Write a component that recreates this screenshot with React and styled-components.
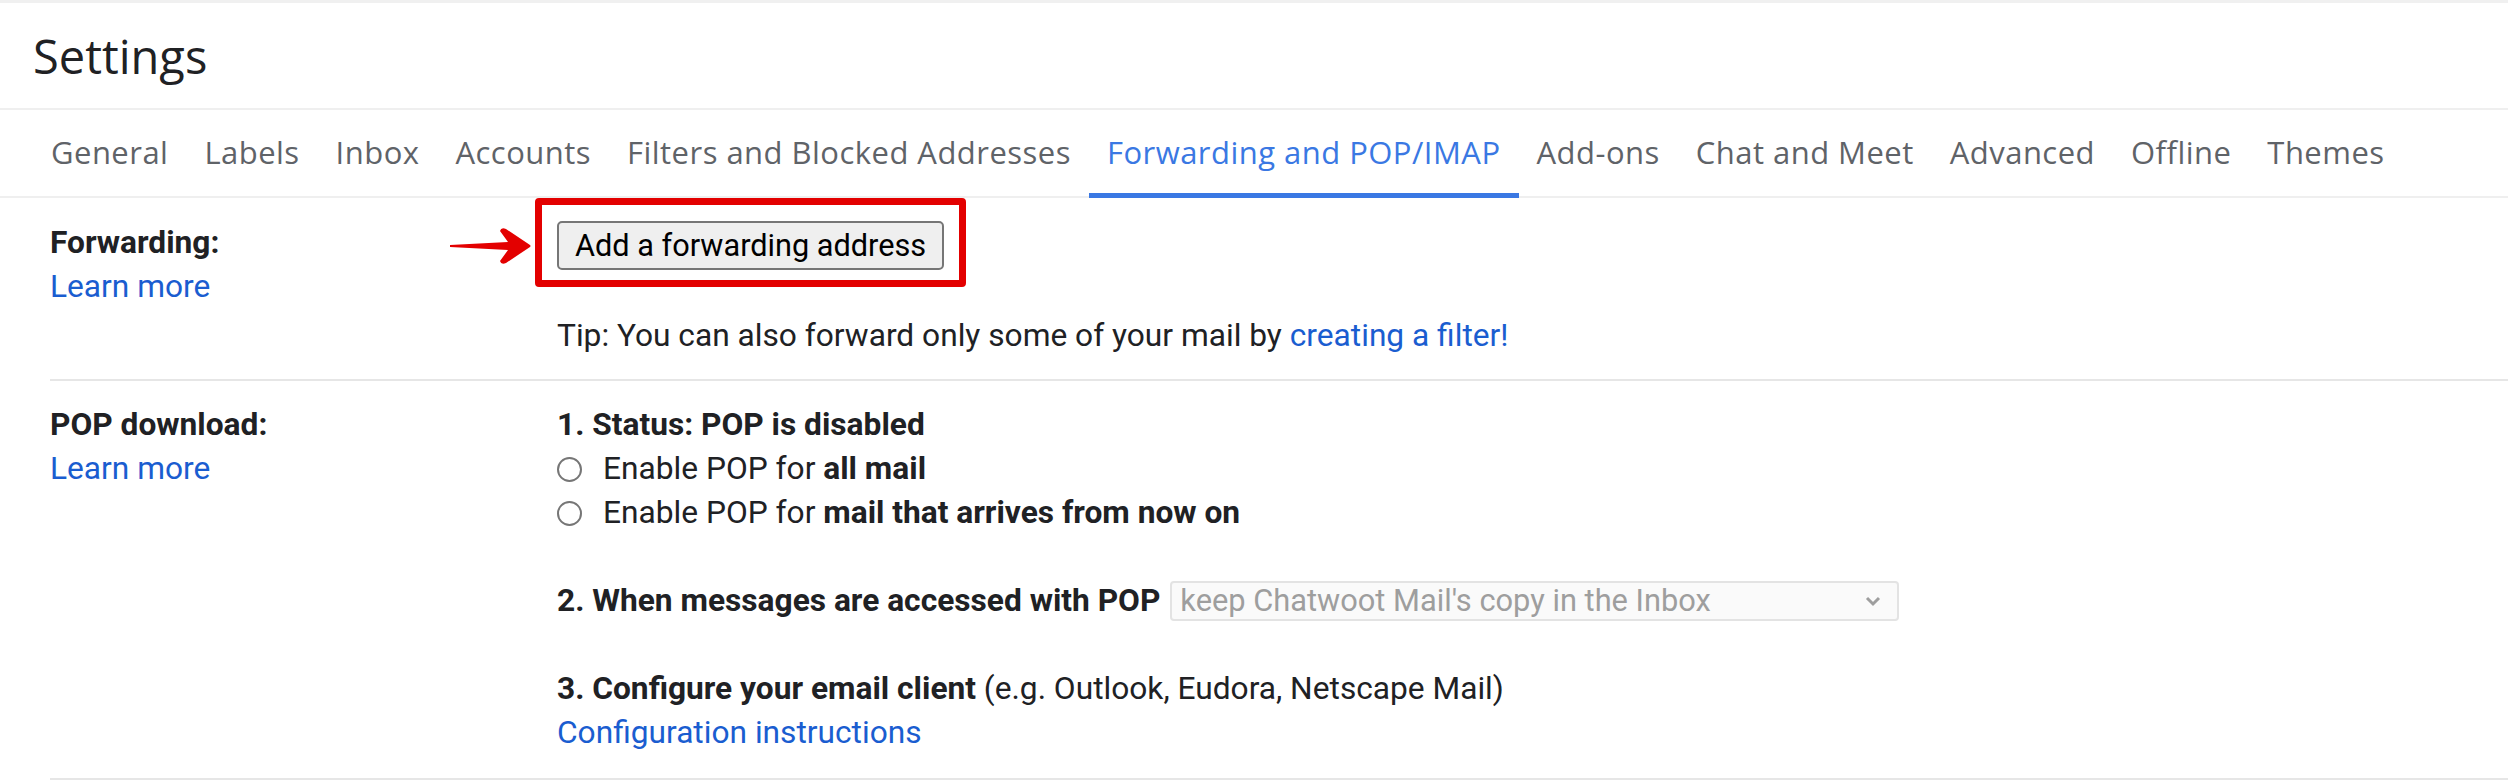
import styled, { createGlobalStyle } from "styled-components";

const GlobalStyle = createGlobalStyle`
  body {
    margin: 0;
    background: #fff;
    font-family: Roboto, "Liberation Sans", Arial, sans-serif;
    color: #202124;
  }
`;

const Page = styled.div`
  width: 2508px;
  border-top: 3px solid #f0f0f0;
`;

const TitleBar = styled.header`
  padding: 21px 0 20px 33px;
  border-bottom: 2px solid #efefef;
`;

const Title = styled.h1`
  margin: 0;
  font-family: "Open Sans", Roboto, sans-serif;
  font-weight: 400;
  font-size: 47px;
  line-height: 64px;
  color: #202124;
`;

const TabBar = styled.nav`
  display: flex;
  padding-left: 33px;
  border-bottom: 2px solid #efefef;
`;

const Tab = styled.div`
  padding: 21px 18px 20px;
  margin-bottom: -2px;
  font-family: "Open Sans", Roboto, sans-serif;
  font-size: 31px;
  line-height: 42px;
  letter-spacing: 0.47px;
  white-space: nowrap;
  color: ${(p) => (p.$active ? "#3a78e3" : "#5f6368")};
  border-bottom: 5px solid ${(p) => (p.$active ? "#3a78e3" : "transparent")};
`;

const Row = styled.section`
  display: flex;
  margin-left: 50px;
  padding: ${(p) => p.$pad};
  border-bottom: 2px solid #e6e6e6;
  font-size: 31.7px;
  line-height: 44px;
`;

const Label = styled.div`
  width: 507px;
  flex-shrink: 0;
`;

const LabelTitle = styled.div`
  font-weight: 700;
`;

const Link = styled.a`
  color: #1a5dd0;
  text-decoration: none;
  cursor: pointer;
`;

const Content = styled.div`
  flex: 1;
`;

const Line = styled.div`
  display: flex;
  align-items: center;
  margin-top: ${(p) => p.$gap || 0}px;
`;

const Strong = styled.b`
  font-weight: 700;
`;

const ButtonWrap = styled.div`
  position: relative;
  display: inline-block;

  &::after {
    content: "";
    position: absolute;
    inset: -23px -22px -17px -22px;
    border: 7px solid #e30000;
    border-radius: 4px;
    pointer-events: none;
  }
`;

const GrayButton = styled.button`
  display: block;
  height: 49px;
  padding: 0 16px;
  font-family: Roboto, "Liberation Sans", Arial, sans-serif;
  font-size: 30.7px;
  color: #000;
  background: #efefef;
  border: 2px solid #767676;
  border-radius: 5px;
`;

const Arrow = styled.svg`
  position: absolute;
  left: -107px;
  top: 4px;
  width: 82px;
  height: 42px;
`;

const Tip = styled.div`
  margin-top: 44px;
`;

const Radio = styled.span`
  width: 25px;
  height: 25px;
  box-sizing: border-box;
  border: 2px solid #767676;
  border-radius: 50%;
  margin-right: 21px;
  flex-shrink: 0;
`;

const Select = styled.div`
  display: flex;
  align-items: center;
  justify-content: space-between;
  width: 729px;
  height: 40px;
  box-sizing: border-box;
  margin-left: 10px;
  padding: 0 16px 0 8px;
  font-size: 30.8px;
  color: #9e9e9e;
  background: #fafafa;
  border: 2px solid #e3e3e3;
  border-radius: 4px;
`;

const tabs = [
  "General",
  "Labels",
  "Inbox",
  "Accounts",
  "Filters and Blocked Addresses",
  "Forwarding and POP/IMAP",
  "Add-ons",
  "Chat and Meet",
  "Advanced",
  "Offline",
  "Themes",
];

const App = () => {
  return (
    <Page>
      <GlobalStyle />
      <TitleBar>
        <Title>Settings</Title>
      </TitleBar>
      <TabBar>
        {tabs.map((t) => (
          <Tab key={t} $active={t === "Forwarding and POP/IMAP"}>
            {t}
          </Tab>
        ))}
      </TabBar>

      <Row $pad="23px 0 21px">
        <Label>
          <LabelTitle>Forwarding:</LabelTitle>
          <Link>Learn more</Link>
        </Label>
        <Content>
          <ButtonWrap>
            <Arrow viewBox="0 0 82 42">
              <path
                d="M0 20 L58 17 L50 6 Q51 2 56 4 L80 20 Q81 21 80 22 L56 38 Q51 40 50 36 L58 25 L0 22 Z"
                fill="#e30000"
              />
            </Arrow>
            <GrayButton>Add a forwarding address</GrayButton>
          </ButtonWrap>
          <Tip>
            Tip: You can also forward only some of your mail by{" "}
            <Link>creating a filter!</Link>
          </Tip>
        </Content>
      </Row>

      <Row $pad="22px 0 23px">
        <Label>
          <LabelTitle>POP download:</LabelTitle>
          <Link>Learn more</Link>
        </Label>
        <Content>
          <Line>
            <Strong>1. Status: POP is disabled</Strong>
          </Line>
          <Line>
            <Radio />
            <span>
              Enable POP for <Strong>all mail</Strong>
            </span>
          </Line>
          <Line>
            <Radio />
            <span>
              Enable POP for <Strong>mail that arrives from now on</Strong>
            </span>
          </Line>
          <Line $gap={44}>
            <Strong>2. When messages are accessed with POP</Strong>
            <Select>
              <span>keep Chatwoot Mail's copy in the Inbox</span>
              <svg width="16" height="12" viewBox="0 0 16 12">
                <path
                  d="M2 3 L8 9 L14 3"
                  fill="none"
                  stroke="#9e9e9e"
                  strokeWidth="3"
                />
              </svg>
            </Select>
          </Line>
          <Line $gap={44}>
            <span>
              <Strong>3. Configure your email client</Strong> (e.g. Outlook,
              Eudora, Netscape Mail)
            </span>
          </Line>
          <Link>Configuration instructions</Link>
        </Content>
      </Row>
    </Page>
  );
};

export default App;
